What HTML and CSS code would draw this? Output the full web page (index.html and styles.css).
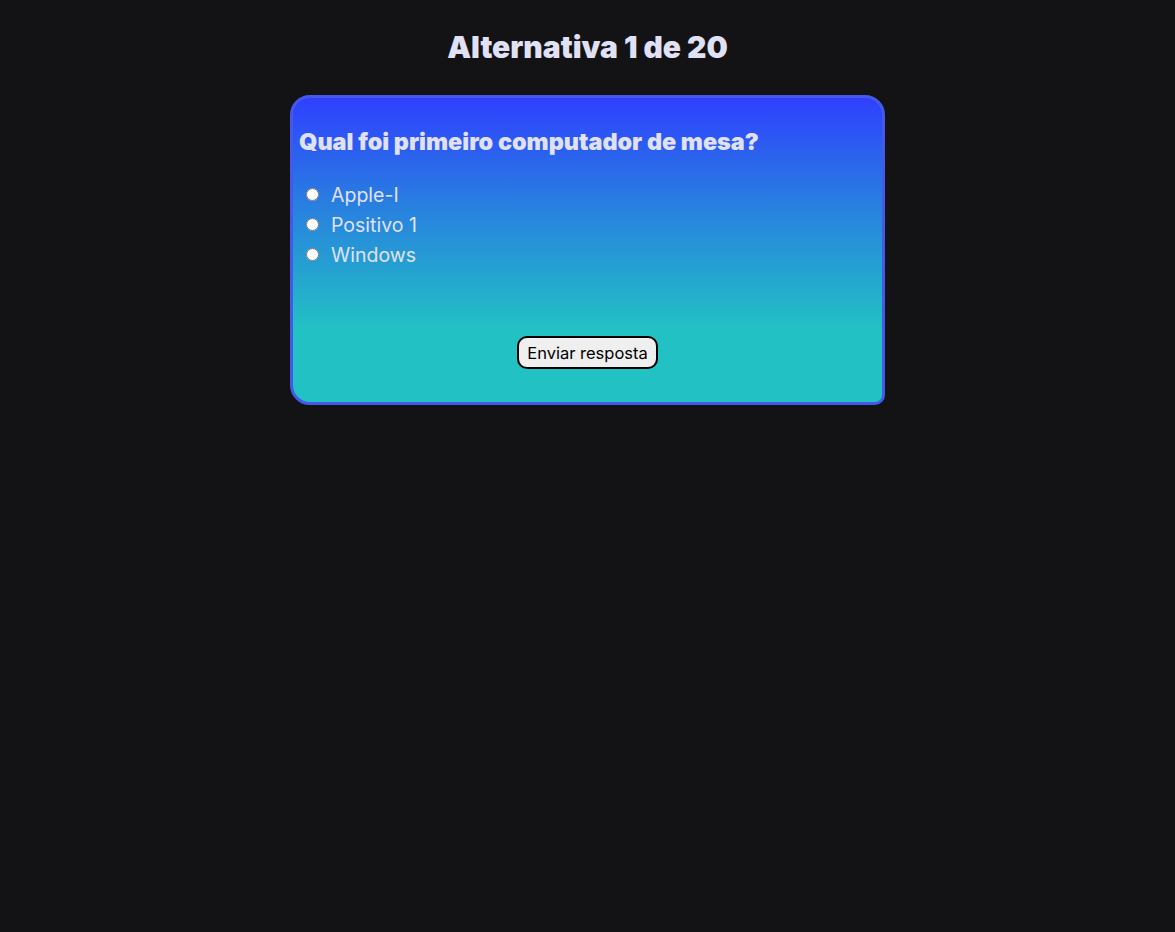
FILE: index.html
```html
<!DOCTYPE html>
<html lang="pt">
<head>
<meta charset="utf-8">
<title>Quiz</title>
<link rel="stylesheet" href="styles.css">
</head>
<body>
<main class="page">
  <h1 class="counter">Alternativa 1 de 20</h1>
  <form class="card">
    <h2 class="question">Qual foi primeiro computador de mesa?</h2>
    <ul class="options">
      <li><label class="option"><input type="radio" name="resp" value="1"><span>Apple-I</span></label></li>
      <li><label class="option"><input type="radio" name="resp" value="2"><span>Positivo 1</span></label></li>
      <li><label class="option"><input type="radio" name="resp" value="3"><span>Windows</span></label></li>
    </ul>
    <div class="actions">
      <button type="button" class="submit">Enviar resposta</button>
    </div>
  </form>
</main>
</body>
</html>
```

FILE: styles.css
```css
html, body {
  margin: 0;
  padding: 0;
  background: #131315;
  font-family: Inter, "Noto Sans", sans-serif;
  color: #e1e1f6;
}

.page {
  display: flex;
  flex-direction: column;
  align-items: center;
  padding-top: 27px;
}

.counter {
  margin: 0;
  font-size: 30px;
  font-weight: 900;
  line-height: 40px;
}

.card {
  box-sizing: border-box;
  width: 595px;
  margin-top: 28px;
  border: 3px solid #4459ea;
  border-radius: 20px 20px 10px 20px;
  background: linear-gradient(180deg, #2f40ff 0%, #287fe0 35%, #22c1c4 76%, #22c1c3 100%);
  padding: 0 6px 33px;
}

.question {
  margin: 29px 0 0;
  font-size: 23.4px;
  font-weight: 900;
  line-height: 30px;
}

.options {
  list-style: none;
  margin: 23px 0 0;
  padding: 0;
}

.option {
  display: flex;
  align-items: center;
  height: 30px;
  font-size: 19.5px;
  line-height: 30px;
}

.option input {
  width: 13px;
  height: 13px;
  margin: 0 12px 2px 7px;
}

.actions {
  display: flex;
  justify-content: center;
  margin-top: 66px;
}

.submit {
  font-family: Inter, "Noto Sans", sans-serif;
  font-size: 16.5px;
  line-height: 20px;
  color: #000;
  background: #efefef;
  border: 2px solid #000;
  border-radius: 10px;
  padding: 5px 8px 4px;
}
```
